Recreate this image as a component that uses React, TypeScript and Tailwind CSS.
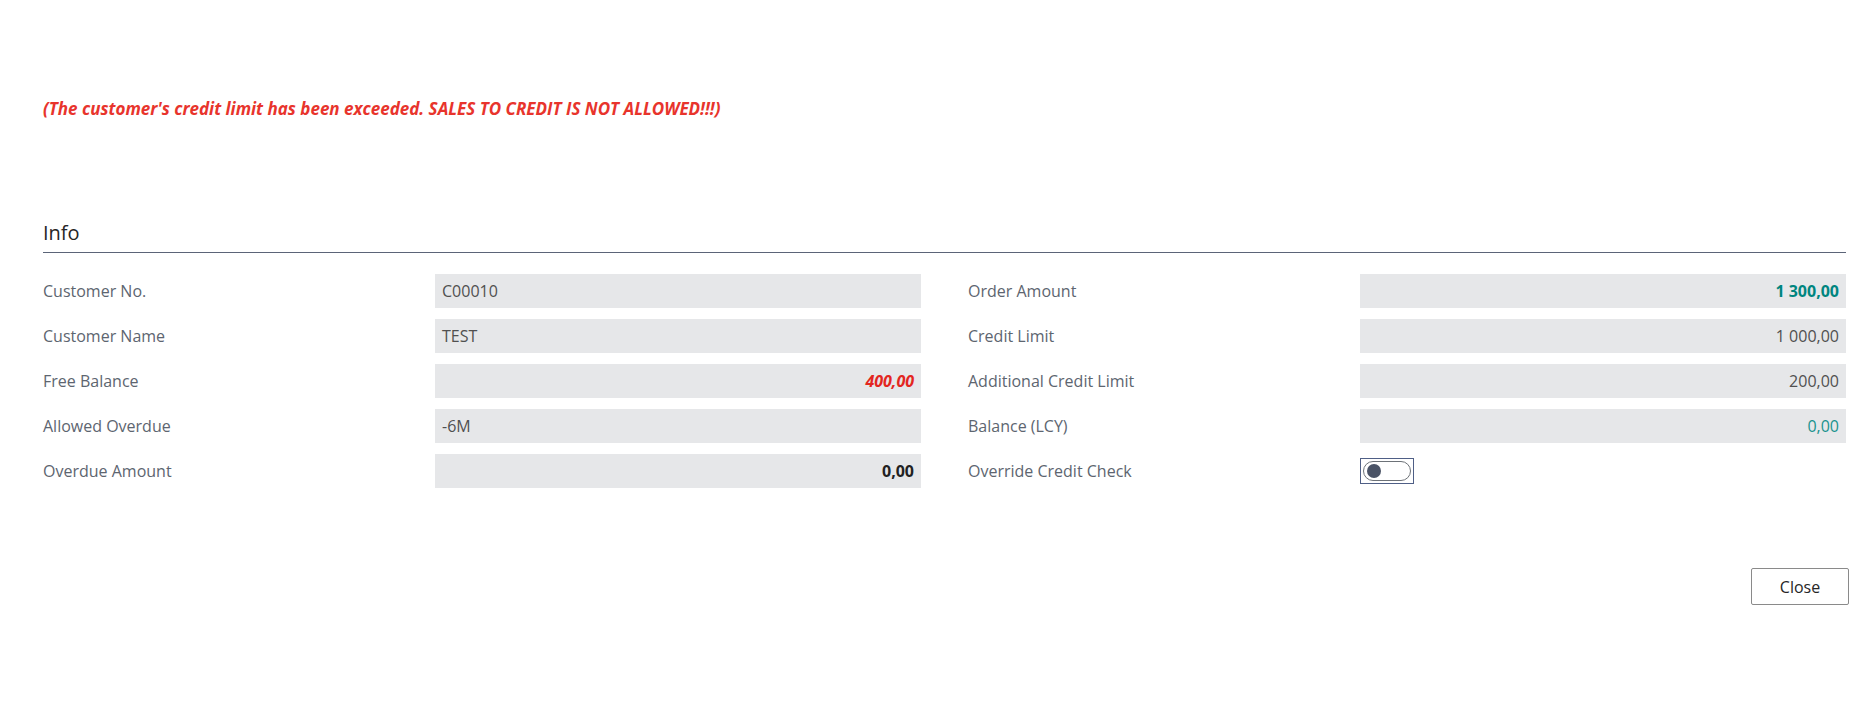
import React from "react";

type Field = {
  label: string;
  value?: string;
  align?: "left" | "right";
  tone?: "plain" | "red" | "bold" | "teal-bold" | "teal";
  toggle?: boolean;
};

const left: Field[] = [
  { label: "Customer No.", value: "C00010" },
  { label: "Customer Name", value: "TEST" },
  { label: "Free Balance", value: "400,00", align: "right", tone: "red" },
  { label: "Allowed Overdue", value: "-6M" },
  { label: "Overdue Amount", value: "0,00", align: "right", tone: "bold" },
];

const right: Field[] = [
  { label: "Order Amount", value: "1 300,00", align: "right", tone: "teal-bold" },
  { label: "Credit Limit", value: "1 000,00", align: "right" },
  { label: "Additional Credit Limit", value: "200,00", align: "right" },
  { label: "Balance (LCY)", value: "0,00", align: "right", tone: "teal" },
  { label: "Override Credit Check", toggle: true },
];

function toneClass(tone?: Field["tone"]) {
  switch (tone) {
    case "red":
      return "text-[#e3261f] font-bold italic";
    case "bold":
      return "text-[#212121] font-bold";
    case "teal-bold":
      return "text-[#00857f] font-bold";
    case "teal":
      return "text-[#1a938e]";
    default:
      return "text-[#505050]";
  }
}

function Row({ f }: { f: Field }) {
  return (
    <div className="flex items-center h-[34px]">
      <div className="w-[392px] shrink-0 text-[#5d6570]">{f.label}</div>
      {f.toggle ? (
        <div className="flex-1">
          <div className="w-[54px] h-[26px] border border-[#4f5f86] flex items-center justify-center">
            <div className="w-[48px] h-[20px] rounded-full border-[1.5px] border-[#6d7278] flex items-center pl-[3px]">
              <div className="w-[14px] h-[14px] rounded-full bg-[#4a5366]" />
            </div>
          </div>
        </div>
      ) : (
        <div
          className={`flex-1 h-[34px] bg-[#e6e7e9] flex items-center px-[7px] ${
            f.align === "right" ? "justify-end" : ""
          } ${toneClass(f.tone)}`}
        >
          {f.value}
        </div>
      )}
    </div>
  );
}

export default function App() {
  return (
    <div
      className="w-[1874px] h-[720px] bg-white pl-[43px] pr-[28px] text-[16px]"
      style={{ fontFamily: '"Open Sans", "Noto Sans", sans-serif' }}
    >
      {/* Warning */}
      <div className="pt-[98px] h-[120px] text-[17px] leading-[22px] font-bold italic text-[#e8342c]">
        (The customer's credit limit has been exceeded. SALES TO CREDIT IS NOT ALLOWED!!!)
      </div>

      {/* Section header */}
      <div className="mt-[100px] pb-[6px] border-b border-[#5b6478] text-[20px] leading-[26px] text-[#262626]">
        Info
      </div>

      <div className="grid grid-cols-2 gap-x-[47px] mt-[21px]">
        <div className="flex flex-col gap-[11px]">
          {left.map((f) => (
            <Row key={f.label} f={f} />
          ))}
        </div>
        <div className="flex flex-col gap-[11px]">
          {right.map((f) => (
            <Row key={f.label} f={f} />
          ))}
        </div>
      </div>

      {/* Footer */}
      <div className="flex justify-end mt-[80px] -mr-[3px]">
        <button className="w-[98px] h-[37px] border border-[#8a8a8a] rounded-[2px] bg-white text-[#262626] text-[16px]">
          Close
        </button>
      </div>
    </div>
  );
}
